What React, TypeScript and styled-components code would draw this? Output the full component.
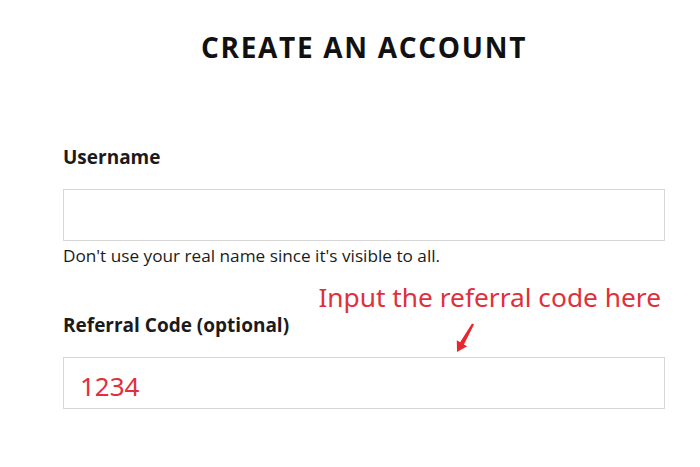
import React from "react";
import styled, { createGlobalStyle } from "styled-components";

const GlobalStyle = createGlobalStyle`
  html, body {
    margin: 0;
    padding: 0;
    background: #fff;
  }
  body {
    font-family: "Open Sans", "Noto Sans", sans-serif;
    color: #1b1b1b;
  }
`;

const Page = styled.main`
  width: 602px;
  margin-left: 63px;
  padding-top: 30px;
`;

const Title = styled.h1`
  margin: 0;
  text-align: center;
  font-size: 28px;
  font-weight: 700;
  letter-spacing: 1.7px;
  line-height: 34px;
  color: #111;
`;

const Field = styled.div<{ $top: number }>`
  display: flex;
  flex-direction: column;
  margin-top: ${(p) => p.$top}px;
`;

const LabelRow = styled.div`
  display: flex;
  align-items: flex-end;
  justify-content: space-between;
  position: relative;
`;

const Label = styled.label`
  font-size: 19px;
  font-weight: 700;
  line-height: 26px;
  color: #1b1b1b;
`;

const Input = styled.input<{ $accent?: boolean }>`
  box-sizing: border-box;
  width: 602px;
  height: 52px;
  margin-top: 19px;
  border: 1px solid #d6d6d6;
  background: #fff;
  padding: 5px 16px 0;
  font-family: "Noto Sans", "Open Sans", sans-serif;
  font-size: 26px;
  color: ${(p) => (p.$accent ? "#e0303a" : "#222")};
  outline: none;
`;

const Hint = styled.p`
  margin: 3px 0 0;
  font-size: 17.2px;
  line-height: 24px;
  color: #1b1b1b;
`;

const Note = styled.div`
  position: absolute;
  right: 4px;
  bottom: 24px;
  color: #e0303a;
  font-family: "Noto Sans", sans-serif;
  font-size: 26.3px;
  line-height: 34px;
  white-space: nowrap;
`;

const Pointer = styled.svg`
  position: absolute;
  left: 392px;
  top: 10px;
`;

export default function App() {
  return (
    <>
      <GlobalStyle />
      <Page>
        <Title>CREATE AN ACCOUNT</Title>

        <Field $top={80}>
          <Label htmlFor="username">Username</Label>
          <Input id="username" />
          <Hint>Don't use your real name since it's visible to all.</Hint>
        </Field>

        <Field $top={44}>
          <LabelRow>
            <Label htmlFor="referral">Referral Code (optional)</Label>
            <Note>Input the referral code here</Note>
            <Pointer width="24" height="32" viewBox="0 0 24 32">
              <path
                d="M17 1.4 L19 2.6 L8.9 22.4 L12.2 24.3 L2 30 L1.8 18.3 L5.1 20.2 Z"
                fill="#e8262e"
              />
            </Pointer>
          </LabelRow>
          <Input id="referral" $accent defaultValue="1234" />
        </Field>
      </Page>
    </>
  );
}
